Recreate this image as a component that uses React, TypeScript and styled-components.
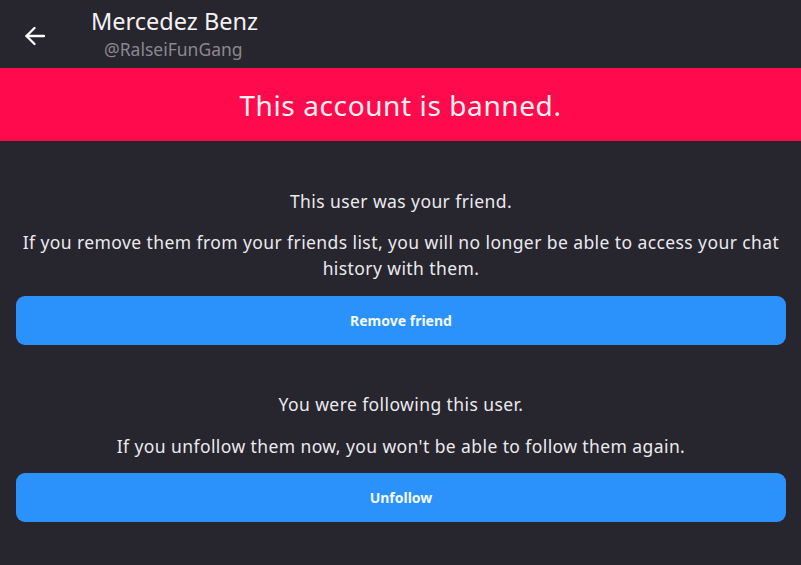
import React from "react";
import styled, { createGlobalStyle } from "styled-components";

const GlobalStyle = createGlobalStyle`
  html, body {
    margin: 0;
    padding: 0;
    background: #27252d;
  }
  body {
    font-family: "Noto Sans", "Open Sans", sans-serif;
    color: #e9e8ec;
  }
`;

const Page = styled.div`
  width: 801px;
  height: 565px;
  background: #27252d;
  overflow: hidden;
`;

const Header = styled.header`
  height: 68px;
  display: flex;
  align-items: center;
  padding-left: 25px;
  background: #27252e;
`;

const BackButton = styled.button`
  width: 20px;
  height: 20px;
  padding: 0;
  border: none;
  background: none;
  display: flex;
  align-items: center;
  justify-content: center;
  margin-top: 3px;
  cursor: pointer;
`;

const NameBlock = styled.div`
  display: flex;
  flex-direction: column;
  gap: 4px;
  margin-left: 46px;
`;

const Name = styled.div`
  font-size: 23.5px;
  line-height: 26px;
  color: #f3f2f5;
`;

const Handle = styled.div`
  font-size: 17.5px;
  line-height: 22px;
  color: #8a8890;
  margin-left: 13px;
`;

const Banner = styled.div`
  height: 73px;
  background: #ff0a4c;
  display: flex;
  align-items: center;
  justify-content: center;
  font-size: 28px;
  letter-spacing: 0.6px;
  color: #fdf0f3;
  padding-top: 1px;
  box-sizing: border-box;
`;

const Content = styled.main`
  padding: 47px 15px 0 16px;
`;

const Section = styled.section<{ $gap?: number }>`
  display: flex;
  flex-direction: column;
  margin-bottom: ${(p) => p.$gap ?? 0}px;
`;

const Text = styled.p<{ $top?: number }>`
  margin: ${(p) => p.$top ?? 0}px 0 0;
  text-align: center;
  font-size: 17.5px;
  letter-spacing: 0.41px;
  line-height: 26px;
  color: #ebeaee;
`;

const ActionButton = styled.button<{ $top?: number }>`
  margin-top: ${(p) => p.$top ?? 15}px;
  height: 49px;
  border: none;
  border-radius: 9px;
  background: #2b92fb;
  color: #f4f9ff;
  font-family: "Noto Sans", sans-serif;
  font-weight: 700;
  font-size: 14px;
  cursor: pointer;
`;

function ArrowLeft() {
  return (
    <svg width="20" height="20" viewBox="0 0 20 20" fill="none" stroke="#ffffff" strokeWidth="2.3" strokeLinecap="round" strokeLinejoin="round">
      <path d="M19 10H1.5" />
      <path d="M9.5 2L1.5 10l8 8" />
    </svg>
  );
}

export default function App() {
  return (
    <>
      <GlobalStyle />
      <Page>
        <Header>
          <BackButton aria-label="Back">
            <ArrowLeft />
          </BackButton>
          <NameBlock>
            <Name>Mercedez Benz</Name>
            <Handle>@RalseiFunGang</Handle>
          </NameBlock>
        </Header>
        <Banner>This account is banned.</Banner>
        <Content>
          <Section $gap={46}>
            <Text>This user was your friend.</Text>
            <Text $top={15}>
              If you remove them from your friends list, you will no longer be able to access your chat history with them.
            </Text>
            <ActionButton $top={15}>Remove friend</ActionButton>
          </Section>
          <Section>
            <Text>You were following this user.</Text>
            <Text $top={16}>If you unfollow them now, you won't be able to follow them again.</Text>
            <ActionButton $top={14}>Unfollow</ActionButton>
          </Section>
        </Content>
      </Page>
    </>
  );
}
